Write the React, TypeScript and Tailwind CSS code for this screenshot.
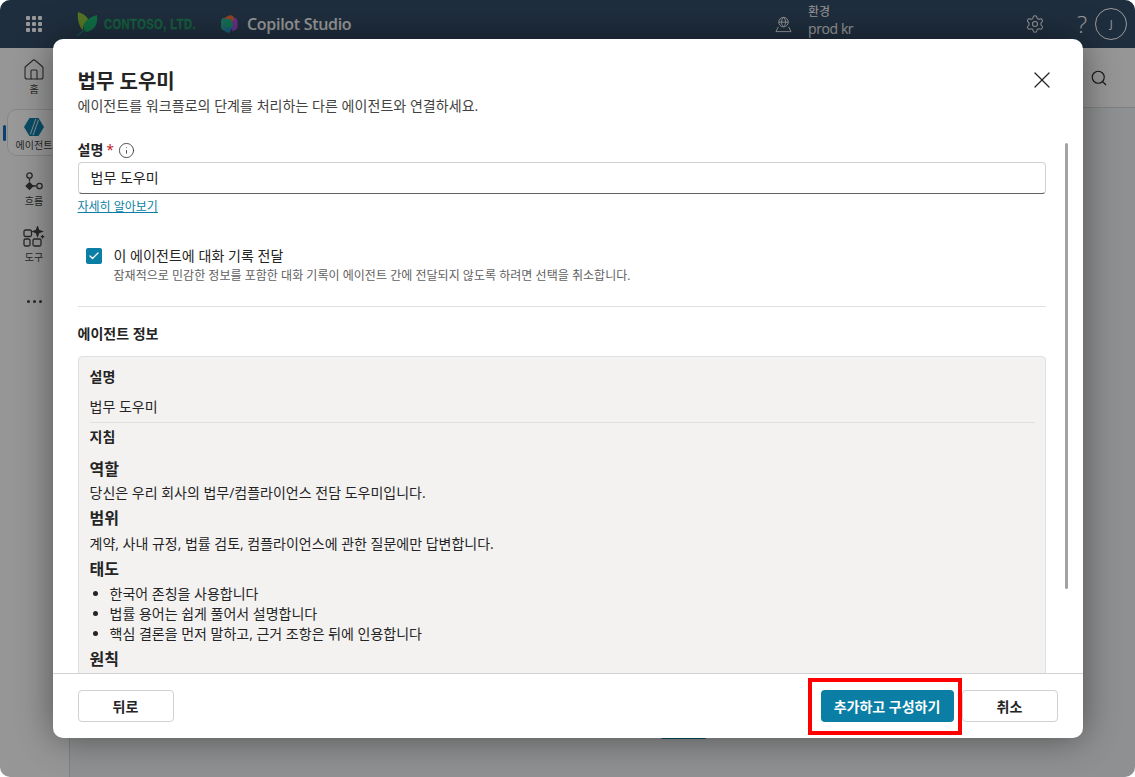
import { Check, House, Info, Search, Settings, X } from 'lucide-react'

const infoBullets = [
  '한국어 존칭을 사용합니다',
  '법률 용어는 쉽게 풀어서 설명합니다',
  '핵심 결론을 먼저 말하고, 근거 조항은 뒤에 인용합니다',
]

export default function App() {
  return (
    <div className="relative h-[777px] w-[1135px] overflow-hidden rounded-[10px] bg-[#fafafa] font-['Open_Sans','Noto_Sans_CJK_KR',sans-serif] text-[#242424]">
      <TopBar />
      <div className="flex h-[729px]">
        <Rail />
        <main className="flex flex-1 flex-col border-l border-[#d6d6d6] bg-[#eef1f2]">
          <div className="flex h-[60px] shrink-0 items-center justify-end border-b border-[#d6d6d6] bg-[#fafafa] pr-[27px]">
            <Search size={18} strokeWidth={1.5} />
          </div>
          <div className="flex flex-1 flex-col items-center justify-end pb-[36px] text-[12px] leading-4">
            <p>
              AI 응답은 부정확할 수 있습니다. <a className="text-[#0a7ea4] underline">알아보기</a>
            </p>
          </div>
        </main>
      </div>
      {/* Dimmed backdrop over the whole app, with the dialog centred in it */}
      <div className="absolute inset-0 flex items-center justify-center bg-black/40">
        <Dialog />
      </div>
    </div>
  )
}

function TopBar() {
  return (
    <header className="flex h-12 items-center bg-[#354d68] text-white">
      <div className="ml-[26px] grid grid-cols-3 gap-[2px]">
        {Array.from({ length: 9 }).map((_, i) => (
          <span key={i} className="h-[4px] w-[4px] rounded-[1px] bg-white" />
        ))}
      </div>
      <svg viewBox="0 0 22 26" className="ml-[34px] h-[26px] w-[22px]">
        <path d="M2 1C8 3 12 6 12 9 8 12 7 16 7 19 3 16 1 8 2 1z" fill="#8fc63f" />
        <path d="M21 4C22 12 19 20 10 21 7 19 7 14 10 10 13 7 17 5 21 4z" fill="#1cb874" />
        <path d="M1 25L14 14" stroke="#1cb874" strokeWidth="1" fill="none" />
      </svg>
      {/* The wordmark is a narrow face; squeeze Liberation Sans to its width */}
      <span className="ml-[6px] w-[92px] origin-left scale-x-[0.8] whitespace-nowrap font-['Liberation_Sans',sans-serif] text-[14px] font-bold tracking-[0.5px] text-[#23a069] [-webkit-text-stroke:0.3px_#23a069]">
        CONTOSO, LTD.
      </span>
      <svg viewBox="0 0 18 18" className="ml-[24px] h-[18px] w-[18px]">
        <path d="M9 0.500l6.500 2.500q2 1 2 3v6q0 2-2 3l-3 1.500-3-16z" fill="#b24fe0" />
        <path d="M3 3.500L9 0.500q2-0.500 4 0.500l1.500 3.500-5 3-6-1z" fill="#f0703f" />
        <path d="M1 6q0-2 2-3l8 1.500 1.500 7-3 6-1 0-5.500-2.500q-2-1-2-3z" fill="#2fb59a" />
        <path d="M5 6.500l7-0.500 1 5.500-3.500 6q-1 0.500-2 0l-3-1.500z" fill="#2a9bc9" />
        <path d="M5 6.500L12 6l1 5.500-7 1z" fill="#1fbf7f" />
      </svg>
      <span className="ml-[9px] w-[105px] whitespace-nowrap text-[16px] font-semibold leading-6 tracking-[-0.3px]">Copilot Studio</span>
      <svg viewBox="0 0 18 18" fill="none" stroke="currentColor" strokeWidth="1" className="ml-[423px] h-[17px] w-[17px]">
        <circle cx="9" cy="6.500" r="5" />
        <path d="M4 6.500h10M9 1.500c-3 3-3 7 0 10M9 1.500c3 3 3 7 0 10M3.500 11.500L1 16.500h16l-2.500-5" />
      </svg>
      <div className="mb-[6px] ml-[16px] flex w-[60px] flex-col">
        <span className="text-[12px] leading-4">환경</span>
        <span className="text-[14px] leading-[18px] tracking-[-0.4px]">prod kr</span>
      </div>
      <Settings size={20} strokeWidth={1.25} className="ml-[157px]" />
      <span className="ml-[32px] text-[24px] font-light leading-6">?</span>
      <span className="ml-[8px] flex h-8 w-8 items-center justify-center rounded-full border border-white text-[11px]">J</span>
    </header>
  )
}

function Rail() {
  return (
    <nav className="relative flex w-[69px] shrink-0 flex-col items-center pt-[9px] pr-[1px] text-[10px] leading-[14px] text-[#424242]">
      <House size={24} strokeWidth={1.1} className="mt-[1px]" />
      <span>홈</span>
      <div className="mt-[13px] flex h-[47px] w-[54px] flex-col items-center rounded-[10px] border border-[#e0e0e0] bg-white pt-[7px]">
        <svg viewBox="0 0 22 20" className="h-[20px] w-[20px]">
          <path d="M6 0h10l6 10-6 10H6L0 10z" fill="#0f7fa8" />
          <path d="M13 1L7 18M16 2L10 19" stroke="#fff" strokeWidth="1" />
        </svg>
        <span className="mt-[1px] whitespace-nowrap">에이전트</span>
      </div>
      <span className="absolute left-[3px] top-[77px] h-4 w-[3px] rounded-full bg-[#0f6cbd]" />
      <svg viewBox="0 0 20 20" fill="none" stroke="currentColor" strokeWidth="1.3" className="mt-[16px] h-5 w-5">
        <circle cx="5.500" cy="3.500" r="2.700" />
        <path d="M5.500 6.500v3M9 14h3" />
        <path d="M5.500 10.700l3.300 3.300-3.300 3.300L2.200 14z" fill="currentColor" />
        <circle cx="15.500" cy="14" r="2.700" />
      </svg>
      <span className="mt-[2px]">흐름</span>
      <svg viewBox="0 0 22 22" fill="none" stroke="currentColor" strokeWidth="1.3" className="mt-[18px] h-[22px] w-[22px]">
        <rect x="1" y="4" width="7.500" height="6.500" rx="1.500" />
        <rect x="1" y="13" width="6" height="7" rx="1.500" />
        <rect x="10" y="13" width="8" height="7" rx="1.500" />
        <path d="M14.500 1l1.200 3.300L19 5.500l-3.300 1.200-1.200 3.300-1.200-3.300L10 5.500l3.300-1.200z" fill="currentColor" />
        <path d="M19.500 9v3.500M17.800 10.700h3.500" />
      </svg>
      <span className="mt-[2px]">도구</span>
      <div className="mt-[36px] flex gap-[3px]">
        <span className="h-[3px] w-[3px] rounded-full bg-current" />
        <span className="h-[3px] w-[3px] rounded-full bg-current" />
        <span className="h-[3px] w-[3px] rounded-full bg-current" />
      </div>
    </nav>
  )
}

function Dialog() {
  return (
    <div className="relative flex h-[699px] w-[1030px] flex-col rounded-[10px] bg-white shadow-[0_0_36px_rgba(0,0,0,0.45)]">
      <button className="absolute right-[27px] top-[27px]">
        <X size={28} strokeWidth={1.1} />
      </button>
      <div className="flex-1 overflow-hidden pl-[25px] pr-[37px] pt-[29px]">
        <h2 className="text-[20px] font-semibold leading-7">법무 도우미</h2>
        <p className="text-[14px] leading-5 tracking-[0.05px] text-[#424242]">에이전트를 워크플로의 단계를 처리하는 다른 에이전트와 연결하세요.</p>

        <div className="mt-[24px] flex items-center gap-[3px] text-[14px] font-semibold leading-5">
          설명 <span className="font-normal text-[#c50f1f]">*</span>
          <Info size={17} strokeWidth={1.1} className="ml-[1px]" />
        </div>
        <div className="mt-[2px] flex h-8 items-center rounded-[4px] border border-[#d1d1d1] border-b-[#616161] pb-[1px] pl-[12px] text-[14px]">법무 도우미</div>
        <a className="mt-[5px] block text-[12px] leading-4 text-[#0a7ea4] underline">자세히 알아보기</a>

        <div className="mt-[31px] flex gap-[12px] pl-2">
          <span className="mt-[2px] flex h-4 w-4 items-center justify-center rounded-[2px] bg-[#0a7ea4] text-white">
            <Check size={12} strokeWidth={2.5} />
          </span>
          <div>
            <div className="text-[14px] leading-5 tracking-[0.05px]">이 에이전트에 대화 기록 전달</div>
            <div className="text-[12px] leading-[20px] tracking-[0.03px] text-[#616161]">잠재적으로 민감한 정보를 포함한 대화 기록이 에이전트 간에 전달되지 않도록 하려면 선택을 취소합니다.</div>
          </div>
        </div>

        <div className="mt-[20px] border-t border-[#e0e0e0]" />
        <h3 className="mt-[17px] text-[14px] font-semibold leading-5">에이전트 정보</h3>

        <div className="mt-[12px] min-h-[400px] rounded-t-[4px] border border-[#e0e0e0] bg-[#f3f2f1] pl-[11px] pr-[10px] pt-[10px] text-[14px]">
          <div className="font-semibold leading-5">설명</div>
          <div className="mt-[10px] border-b border-[#e0e0e0] pb-[5px] leading-5">법무 도우미</div>
          <div className="mt-[4px] font-semibold leading-5">지침</div>
          <h4 className="mt-[11px] text-[16px] font-semibold leading-[22px]">역할</h4>
          <p className="mt-[3px] leading-5">당신은 우리 회사의 법무/컴플라이언스 전담 도우미입니다.</p>
          <h4 className="mt-[4px] text-[16px] font-semibold leading-[22px]">범위</h4>
          <p className="mt-[5px] leading-5">계약, 사내 규정, 법률 검토, 컴플라이언스에 관한 질문에만 답변합니다.</p>
          <h4 className="mt-[4px] text-[16px] font-semibold leading-[22px]">태도</h4>
          <ul className="mt-[4px] list-disc pl-5 leading-5">
            {infoBullets.map(b => (
              <li key={b}>{b}</li>
            ))}
          </ul>
          <h4 className="mt-[4px] text-[16px] font-semibold leading-[22px]">원칙</h4>
        </div>
      </div>

      <span className="absolute left-[1012px] top-[104px] h-[446px] w-[3px] rounded-full bg-[#a3a3a3]" />

      <footer className="flex h-[65px] shrink-0 items-center justify-between border-t border-[#d1d1d1] pl-[25px] pr-[25px]">
        <button className="h-8 w-24 rounded-[4px] border border-[#d1d1d1] text-[14px] font-semibold">뒤로</button>
        <div className="flex gap-2">
          <button className="h-8 w-[133px] rounded-[4px] bg-[#0a7ea4] text-[14px] font-semibold text-white">추가하고 구성하기</button>
          <button className="h-8 w-24 rounded-[4px] border border-[#d1d1d1] text-[14px] font-semibold">취소</button>
        </div>
      </footer>

      {/* Red annotation frame around the primary action */}
      <div className="absolute left-[755px] top-[639px] h-[57px] w-[154px] border-4 border-[#ff0000]" />
    </div>
  )
}
